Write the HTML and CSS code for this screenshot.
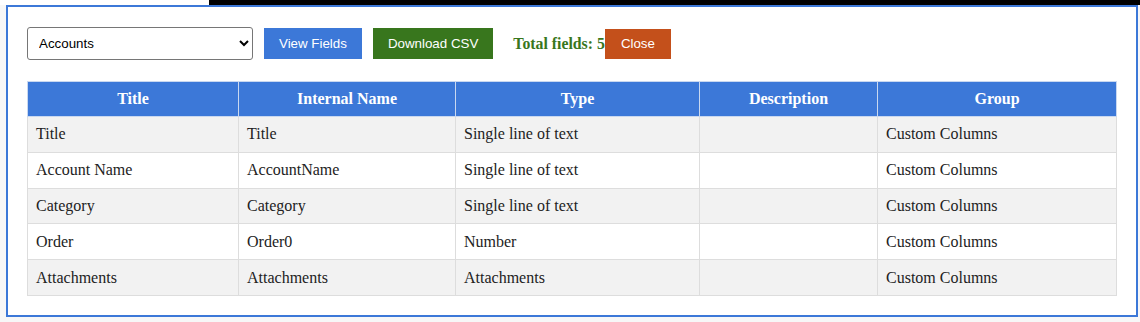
FILE: index.html
```html
<!DOCTYPE html>
<html>
<head>
<meta charset="utf-8">
<link rel="stylesheet" href="styles.css">
</head>
<body>
<div class="backdrop">
  <div class="strip"><div class="strip-left"></div><div class="strip-right"></div></div>
  <div class="dialog">
    <div class="toolbar">
      <select class="list-select">
        <option>Accounts</option>
      </select>
      <button class="btn btn-blue">View Fields</button>
      <button class="btn btn-green">Download CSV</button>
      <span class="total">Total fields: 5</span>
      <button class="btn btn-orange">Close</button>
    </div>
    <table class="fields">
      <colgroup>
        <col class="c1"><col class="c2"><col class="c3"><col class="c4"><col class="c5">
      </colgroup>
      <thead>
        <tr><th>Title</th><th>Internal Name</th><th>Type</th><th>Description</th><th>Group</th></tr>
      </thead>
      <tbody>
        <tr><td>Title</td><td>Title</td><td>Single line of text</td><td></td><td>Custom Columns</td></tr>
        <tr><td>Account Name</td><td>AccountName</td><td>Single line of text</td><td></td><td>Custom Columns</td></tr>
        <tr><td>Category</td><td>Category</td><td>Single line of text</td><td></td><td>Custom Columns</td></tr>
        <tr><td>Order</td><td>Order0</td><td>Number</td><td></td><td>Custom Columns</td></tr>
        <tr><td>Attachments</td><td>Attachments</td><td>Attachments</td><td></td><td>Custom Columns</td></tr>
      </tbody>
    </table>
  </div>
</div>
</body>
</html>
```
FILE: styles.css
```css
html, body {
  margin: 0;
  padding: 0;
  background: #ffffff;
}
.backdrop {
  width: 1140px;
  height: 322px;
  overflow: hidden;
  background: #f7f7f7;
}
.strip {
  display: flex;
  height: 5px;
}
.strip-left {
  width: 209px;
  background: #ffffff;
}
.strip-right {
  flex: 1;
  background: #000000;
}
.dialog {
  box-sizing: border-box;
  margin-left: 6px;
  width: 1132px;
  height: 312px;
  border: 2px solid #3c78d8;
  background: #ffffff;
  padding: 20px 19px;
}
.toolbar {
  display: flex;
  align-items: center;
  height: 33px;
}
.list-select {
  box-sizing: border-box;
  width: 226px;
  height: 33px;
  font-family: "Liberation Sans", Arial, sans-serif;
  font-size: 13.333px;
  color: #000;
  padding: 0 7px;
  border: 1px solid #767676;
  border-radius: 3px;
  background: #ffffff;
  margin-right: 11px;
}
.btn {
  font-family: "Liberation Sans", Arial, sans-serif;
  font-size: 13.333px;
  line-height: 15px;
  color: #ffffff;
  border: none;
  padding: 8px 15px;
  margin-right: 11px;
  cursor: pointer;
}
.btn-blue {
  background: #3c78d8;
}
.btn-green {
  background: #38761d;
  margin-right: 20px;
}
.btn-orange {
  background: #c4501b;
  padding: 7px 16px 8px 16px;
  margin-right: 0;
}
.total {
  font-family: "Liberation Serif", "Times New Roman", serif;
  font-weight: bold;
  font-size: 15.8px;
  color: #38761d;
}
.fields {
  margin-top: 21px;
  width: 1089px;
  border-collapse: collapse;
  table-layout: fixed;
  font-family: "Liberation Serif", "Times New Roman", serif;
}
.c1 { width: 211px; }
.c2 { width: 217px; }
.c3 { width: 244px; }
.c4 { width: 178px; }
.c5 { width: 239px; }
.fields th {
  background: #3c78d8;
  color: #ffffff;
  font-weight: bold;
  font-size: 16px;
  height: 34px;
  padding: 0 8px;
  border: 1px solid #c9d8f0;
  text-align: center;
}
.fields td {
  height: 34.8px;
  padding: 0 8px;
  font-size: 16px;
  color: #222222;
  border: 1px solid #dddddd;
  text-align: left;
}
.fields tbody tr:nth-child(odd) {
  background: #f2f2f2;
}
.fields tbody tr:nth-child(even) {
  background: #ffffff;
}
```
